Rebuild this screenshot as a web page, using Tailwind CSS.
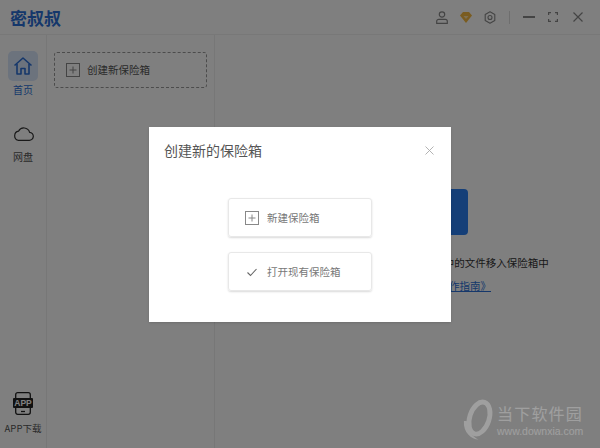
<!DOCTYPE html>
<html lang="zh-CN">

<head>
  <meta charset="UTF-8">
  <title>密叔叔</title>
  <script src="https://cdn.jsdelivr.net/npm/@tailwindcss/browser@4"></script>
</head>

<body class="relative w-[600px] h-[448px] overflow-hidden bg-white text-[#333] font-['Noto_Sans_CJK_SC','Noto_Sans',sans-serif]">

  <!-- Header -->
  <header class="h-[35px] flex items-center border-b border-[#f0f0f0] pl-[10px] pr-[17px]">
    <h1 class="text-[17px] font-bold text-[#2b6fd6] leading-none">密叔叔</h1>
    <div class="ml-auto flex items-center text-[#888]">
      <svg class="w-[12px] h-[13px]" viewBox="0 0 12 13" fill="none" stroke="currentColor" stroke-width="1.2"><circle cx="6" cy="3.500" r="2.700"/><path d="M.7 12.300v-2c0-1.200 1-2 2-2h6.600c1 0 2 .8 2 2v2z"/></svg>
      <svg class="w-[12px] h-[11px] ml-[12px] text-[#f5b942]" viewBox="0 0 12 11" fill="currentColor"><path d="M0 3.500L3 0h6l3 3.500L6 11z"/><path d="M3.500 4h5L6 7z" fill="#ffe2a8"/></svg>
      <svg class="w-[12px] h-[13px] ml-[12px]" viewBox="0 0 12 13" fill="none" stroke="currentColor" stroke-width="1.100" stroke-linejoin="round"><path d="M6 .8l4.800 2.800v5.800L6 12.200 1.200 9.400V3.600z"/><circle cx="6" cy="6.500" r="2"/></svg>
      <div class="w-px h-[13px] bg-[#ddd] ml-[13px]"></div>
      <div class="w-[12px] h-[1.500px] bg-current ml-[13px]"></div>
      <svg class="w-[10px] h-[10px] ml-[13px]" viewBox="0 0 10 10" fill="none" stroke="currentColor" stroke-width="1.200"><path d="M.6 3V.6H3M7 .6h2.400V3M9.400 7v2.400H7M3 9.400H.6V7"/></svg>
      <svg class="w-[10px] h-[10px] ml-[15px]" viewBox="0 0 10 10" fill="none" stroke="currentColor" stroke-width="1.200"><path d="M.5.5l9 9M9.500.5l-9 9"/></svg>
    </div>
  </header>

  <div class="flex h-[413px]">
    <!-- Sidebar -->
    <aside class="w-[47px] shrink-0 border-r border-[#eee] flex flex-col items-center pt-[16px] pb-[13px]">
      <div class="w-[30px] h-[30px] rounded-[5px] bg-[#d9e6fa] flex items-center justify-center text-[#2b6fd6]">
        <svg class="w-[20px] h-[20px]" viewBox="0 0 20 20" fill="none" stroke="currentColor" stroke-width="1.600" stroke-linejoin="round"><path d="M1.500 9.500L10 2l8.500 7.500"/><path d="M4 8v10h4v-5.500h4V18h4V8"/></svg>
      </div>
      <span class="mt-[2px] text-[10px] leading-[14px] text-[#2b6fd6]">首页</span>
      <svg class="mt-[30px] w-[22px] h-[14px] text-[#333]" viewBox="0 0 22 14" fill="none" stroke="currentColor" stroke-width="1.200"><path d="M6 13.300h11a4 4 0 0 0 .6-8A6 6 0 0 0 6.500 4.200 4.700 4.700 0 0 0 6 13.300z"/></svg>
      <span class="mt-[9px] text-[10px] leading-[14px] text-[#555]">网盘</span>

      <!-- APP download -->
      <svg class="mt-auto w-[20px] h-[23px] text-[#222]" viewBox="0 0 20 23" fill="none">
        <rect x="2.700" y="0.700" width="14.600" height="21.600" rx="2" stroke="currentColor" stroke-width="1.300"/>
        <rect x="0" y="6" width="20" height="10" rx="1" fill="currentColor"/>
        <text x="10" y="14.300" text-anchor="middle" font-size="8.500" font-weight="700" fill="#fff" font-family="Liberation Sans">APP</text>
        <path d="M8 19.500h4" stroke="currentColor" stroke-width="1.300"/>
      </svg>
      <span class="mt-[6px] text-[9.500px] leading-[14px] text-[#555] whitespace-nowrap">APP下载</span>
    </aside>

    <!-- Vault list -->
    <section class="w-[168px] shrink-0 border-r border-[#eee] pt-[17px] px-[7px]">
      <button class="w-[153px] h-[36px] border border-dashed border-[#999] rounded-[3px] flex items-center pl-[11px] text-[10.500px] text-[#555]">
        <svg class="w-[14px] h-[14px] mr-[7px]" viewBox="0 0 14 14" fill="none" stroke="#888" stroke-width="1"><rect x=".5" y=".5" width="13" height="13"/><path d="M7 3.500v7M3.500 7h7"/></svg>
        创建新保险箱
      </button>
    </section>

    <!-- Empty state -->
    <main class="flex-1 flex flex-col items-center pt-[154px] pr-px">
      <div class="w-[122px] h-[46px] rounded-[4px] bg-[#2b7ff0]"></div>
      <p class="mt-[20px] text-[10.500px] leading-[16px] whitespace-nowrap text-[#333]">您可以创建新的保险箱，并把您的电脑中的文件移入保险箱中</p>
      <p class="mt-[7px] text-[10.500px] leading-[16px] whitespace-nowrap text-[#333]">如需帮助，请点击查看<a class="text-[#2b6fd6] underline">《操作指南》</a></p>
    </main>
  </div>

  <!-- Mask -->
  <div class="absolute inset-0 bg-black/50 flex items-start justify-start">
    <!-- Dialog -->
    <div class="ml-[149px] mt-[127px] w-[302px] h-[195px] bg-white shadow-sm flex flex-col">
      <div class="flex items-center justify-between pl-[15px] pr-[17px] pt-[13px]">
        <h2 class="text-[14px] leading-[20px] text-[#555]">创建新的保险箱</h2>
        <svg class="w-[9px] h-[9px] text-[#aaa]" viewBox="0 0 9 9" fill="none" stroke="currentColor" stroke-width="0.900"><path d="M.5.500l8 8M8.500.500l-8 8"/></svg>
      </div>
      <div class="flex flex-col items-center gap-[15px] mt-[38px]">
        <button class="w-[144px] h-[39px] rounded-[3px] border border-[#e8e8e8] shadow-[0_1px_2px_rgba(0,0,0,0.15)] flex items-center pl-[16px] text-[10.500px] text-[#777]">
          <svg class="w-[14px] h-[14px] mr-[8px]" viewBox="0 0 14 14" fill="none" stroke="#888" stroke-width="1"><rect x=".5" y=".5" width="13" height="13"/><path d="M7 3.500v7M3.500 7h7"/></svg>
          新建保险箱
        </button>
        <button class="w-[144px] h-[39px] rounded-[3px] border border-[#e8e8e8] shadow-[0_1px_2px_rgba(0,0,0,0.15)] flex items-center pl-[16px] text-[10.500px] text-[#777]">
          <svg class="w-[14px] h-[14px] mr-[8px]" viewBox="0 0 14 14" fill="none" stroke="#666" stroke-width="1.100"><path d="M2.500 7.500l3 3 6-6.500"/></svg>
          打开现有保险箱
        </button>
      </div>
    </div>
  </div>

  <!-- Watermark -->
  <div class="absolute left-[461px] top-[397px] flex items-center opacity-25 text-white">
    <svg class="w-[33px] h-[46px]" viewBox="0 0 34 46" fill="none"><ellipse cx="19" cy="21" rx="10" ry="17" transform="rotate(18 19 21)" stroke="currentColor" stroke-width="5"/><path d="M3 24c-1 12 8 19 15 19-7-3-11-10-12-19z" fill="currentColor"/></svg>
    <div class="ml-[3px] flex flex-col">
      <span class="text-[16px] leading-[20px] tracking-[1.200px] whitespace-nowrap">当下软件园</span>
      <span class="text-[10.500px] leading-[12px] font-['Liberation_Sans'] mt-[2px] whitespace-nowrap">www.downxia.com</span>
    </div>
  </div>

</body>

</html>
